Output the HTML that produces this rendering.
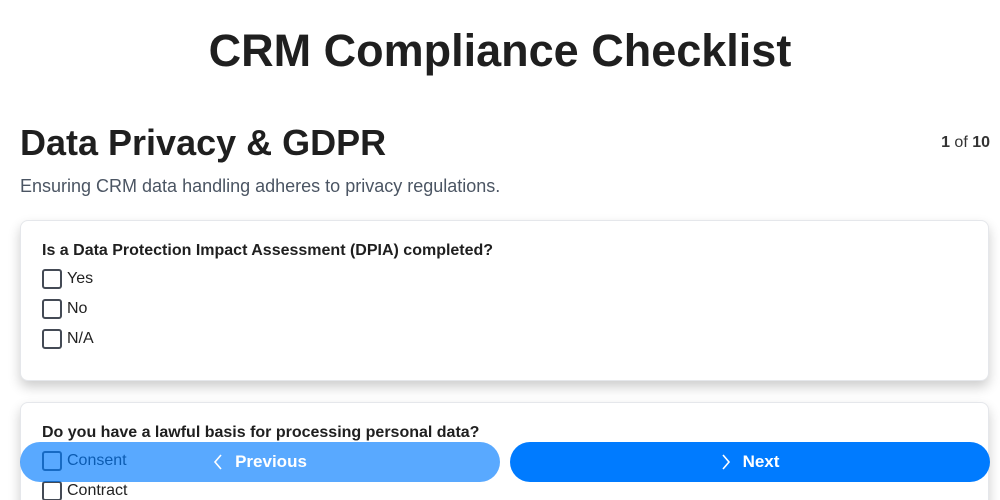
<!DOCTYPE html><html><head><style>
html{overflow:hidden;height:500px}
body{margin:0;width:1000px;height:500px;overflow:hidden;background:#fff;font-family:"Liberation Sans",sans-serif;color:#222;position:relative}
h1{position:absolute;top:26px;left:0;width:1000px;text-align:center;margin:0;font-size:45px;line-height:50px;font-weight:bold;color:#1f1f1f}
h2{position:absolute;top:122px;left:20px;margin:0;font-size:36px;line-height:42px;font-weight:bold;color:#1f1f1f}
.pg{position:absolute;top:134px;right:10px;font-size:16px;color:#333}
.sub{position:absolute;top:176px;left:20px;font-size:18px;color:#4b5563}
.card{position:absolute;left:20px;width:967px;background:#fff;border:1px solid #e5e7eb;border-radius:8px;box-shadow:0 6px 12px rgba(0,0,0,.2)}
.q{position:absolute;left:21px;font-size:16px;font-weight:bold;color:#1f1f1f}
.opt{position:absolute;left:21px;font-size:16px;color:#222;height:20px;line-height:20px}
.opt i{position:absolute;left:0;top:0;width:16px;height:16px;border:2px solid #444a55;border-radius:3px}
.opt span{position:absolute;left:25px;top:0;white-space:nowrap}
.btn{position:absolute;top:442px;height:40px;border-radius:20px;color:#fff;font-weight:bold;font-size:17px;line-height:40px;text-align:center}
.btn svg{vertical-align:-3px;margin-right:12px}
</style></head><body>
<h1>CRM Compliance Checklist</h1>
<h2>Data Privacy &amp; GDPR</h2>
<div class="pg"><b>1</b> of <b>10</b></div>
<div class="sub">Ensuring CRM data handling adheres to privacy regulations.</div>
<div class="card" style="top:220px;height:159px">
<div class="q" style="top:21px">Is a Data Protection Impact Assessment (DPIA) completed?</div>
<div class="opt" style="top:48px"><i></i><span>Yes</span></div>
<div class="opt" style="top:78px"><i></i><span>No</span></div>
<div class="opt" style="top:108px"><i></i><span>N/A</span></div>
</div>
<div class="card" style="top:402px;height:120px">
<div class="q" style="top:21px">Do you have a lawful basis for processing personal data?</div>
<div class="opt" style="top:48px"><i></i><span>Consent</span></div>
<div class="opt" style="top:78px"><i></i><span>Contract</span></div>
</div>
<div class="btn" style="left:20px;width:480px;background:rgba(0,123,255,.65)"><svg width="10" height="16" viewBox="0 0 10 16"><path d="M8 1L2 8l6 7" stroke="#fff" stroke-width="1.6" fill="none"/></svg>Previous</div>
<div class="btn" style="left:510px;width:480px;background:#007bff"><svg width="10" height="16" viewBox="0 0 10 16"><path d="M2 1l6 7-6 7" stroke="#fff" stroke-width="1.6" fill="none"/></svg>Next</div>
</body></html>
